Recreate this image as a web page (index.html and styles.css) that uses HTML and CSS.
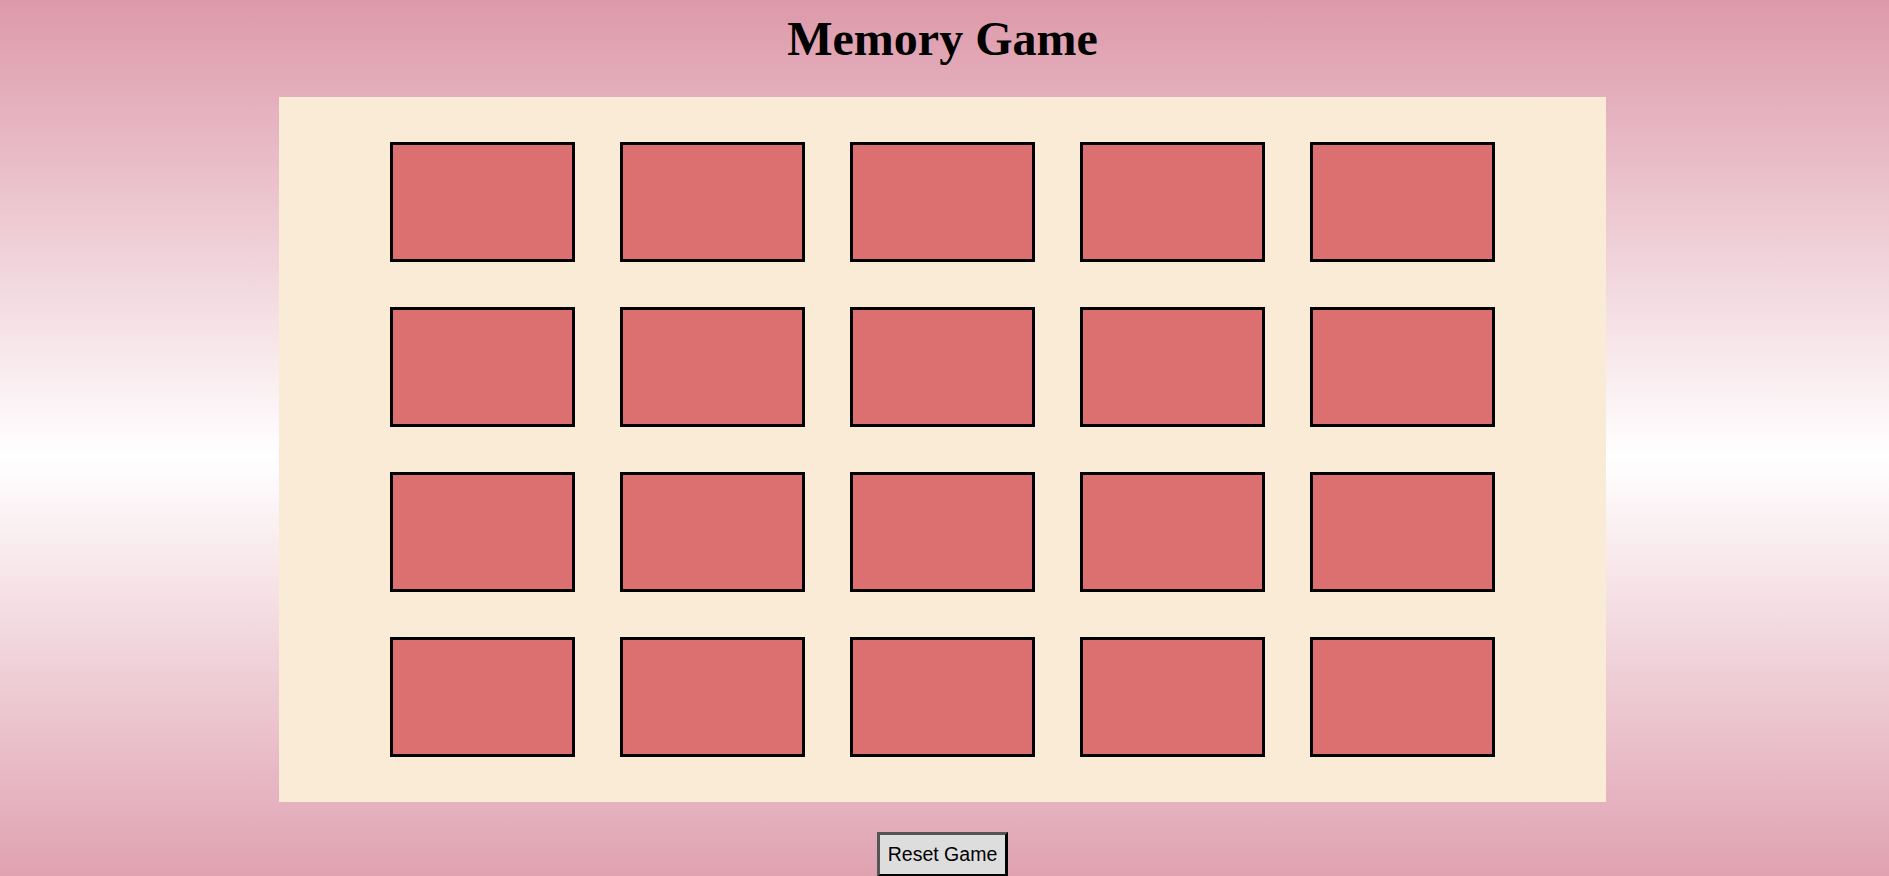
FILE: index.html
```html
<!DOCTYPE html>
<html lang="en">
<head>
<meta charset="utf-8">
<title>Memory Game</title>
<link rel="stylesheet" href="styles.css">
</head>
<body>
  <h1 class="title">Memory Game</h1>
  <main class="board">
    <div class="card"></div><div class="card"></div><div class="card"></div><div class="card"></div><div class="card"></div>
    <div class="card"></div><div class="card"></div><div class="card"></div><div class="card"></div><div class="card"></div>
    <div class="card"></div><div class="card"></div><div class="card"></div><div class="card"></div><div class="card"></div>
    <div class="card"></div><div class="card"></div><div class="card"></div><div class="card"></div><div class="card"></div>
  </main>
  <div class="controls">
    <button class="reset" type="button">Reset Game</button>
  </div>
</body>
</html>
```

FILE: styles.css
```css
html {
  margin: 0;
}
body {
  margin: 0;
  padding: 11px 4px 38px 0;
  font-family: "Liberation Serif", "Times New Roman", serif;
  background: linear-gradient(to bottom, #dd99aa 0%, #ffffff 50%, #dd99aa 100%);
  display: flex;
  flex-direction: column;
  align-items: center;
}
.title {
  margin: 0 0 31px;
  font-size: 48px;
  font-weight: bold;
  color: #000;
  line-height: 55px;
  text-align: center;
}
.board {
  width: 1327px;
  box-sizing: border-box;
  padding: 45px 0;
  background: #faebd7;
  display: grid;
  grid-template-columns: repeat(5, 185px);
  grid-auto-rows: 120px;
  column-gap: 45px;
  row-gap: 45px;
  justify-content: center;
}
.card {
  box-sizing: border-box;
  background: #dc6f6f;
  border: 3px solid #000;
}
.controls {
  margin-top: 30px;
  display: flex;
  justify-content: center;
}
.reset {
  font-family: "Liberation Sans", Arial, sans-serif;
  font-size: 19.5px;
  color: #000;
  background: #dddddd;
  padding: 8px 8px;
  border-width: 3px;
  border-style: solid;
  border-color: #555 #000 #000 #555;
  border-radius: 0;
  line-height: normal;
}
```
